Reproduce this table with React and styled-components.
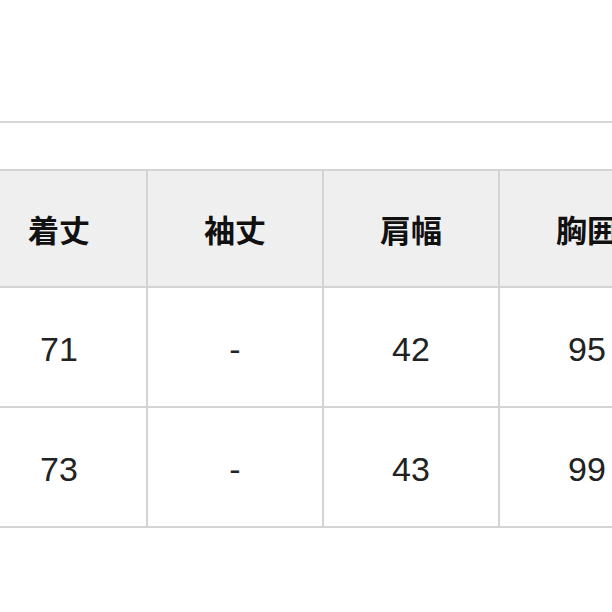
import React from 'react';
import styled, { createGlobalStyle } from 'styled-components';

const GlobalStyle = createGlobalStyle`
  html, body {
    margin: 0;
    padding: 0;
    background: #ffffff;
    overflow: hidden;
  }
  body {
    font-family: "Liberation Sans", "Noto Sans CJK JP", sans-serif;
  }
`;

const Page = styled.div`
  width: 612px;
  height: 612px;
  padding-top: 121px;
  box-sizing: border-box;
  overflow: hidden;
`;

const Divider = styled.div`
  height: 2px;
  background: #d6d6d6;
  margin-bottom: 46px;
`;

const Table = styled.div`
  display: grid;
  grid-template-columns: repeat(4, 176px);
  margin-left: -28px;
  width: 704px;
  border-top: 2px solid #d4d4d4;
`;

const Cell = styled.div`
  box-sizing: border-box;
  height: ${p => (p.$head ? '117px' : '120px')};
  display: flex;
  align-items: center;
  justify-content: center;
  border-right: 2px solid #d4d4d4;
  border-bottom: 2px solid #d4d4d4;
  background: ${p => (p.$head ? '#efeff0' : '#ffffff')};
  color: ${p => (p.$head ? '#111111' : '#222222')};
  font-size: ${p => (p.$head ? '31px' : '34px')};
  font-weight: ${p => (p.$head ? 700 : 400)};
  font-family: ${p =>
    p.$head
      ? '"Noto Sans CJK JP", sans-serif'
      : '"Liberation Sans", "Noto Sans CJK JP", sans-serif'};
  padding-top: ${p => (p.$head ? '0' : '4px')};
`;

const headers = ['着丈', '袖丈', '肩幅', '胸囲'];
const rows = [
  ['71', '-', '42', '95'],
  ['73', '-', '43', '99'],
];

export default function App() {
  return (
    <>
      <GlobalStyle />
      <Page>
        <Divider />
        <Table>
          {headers.map(h => (
            <Cell $head key={h}>{h}</Cell>
          ))}
          {rows.map((r, i) =>
            r.map((v, j) => <Cell key={i + '-' + j}>{v}</Cell>)
          )}
        </Table>
      </Page>
    </>
  );
}
